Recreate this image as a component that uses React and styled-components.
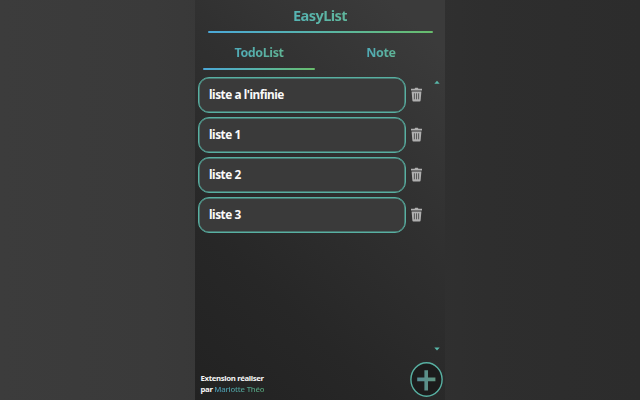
import React from "react";
import styled, { createGlobalStyle } from "styled-components";

const GlobalStyle = createGlobalStyle`
  * { box-sizing: border-box; }
  body { margin: 0; background: #2d2d2d; overflow: hidden; }
`;

const Page = styled.main`
  width: 640px;
  height: 400px;
  display: flex;
  justify-content: center;
  background: linear-gradient(90deg, #3c3c3c 0%, #3a3a3a 24%, #2e2e2e 76%, #2c2c2c 100%);
  font-family: "Noto Sans", "Open Sans", sans-serif;
  font-weight: 600;
`;

const Panel = styled.section`
  width: 250px;
  height: 400px;
  display: flex;
  flex-direction: column;
  background: linear-gradient(42deg, #222 0%, #272727 28%, #303030 60%, #3b3b3b 92%);
`;

const Header = styled.header`
  height: 33px;
  margin: 0 12.5px;
  display: flex;
  flex-direction: column;
  align-items: center;
  justify-content: space-between;
`;

const Title = styled.h1`
  margin: 5px 0 0;
  font-size: 14.6px;
  line-height: 21px;
  font-weight: 700;
  letter-spacing: -0.6px;
  color: transparent;
  background: linear-gradient(90deg, #55b4b4, #60b69c);
  background-clip: text;
`;

const Underline = styled.div`
  width: 100%;
  height: 2px;
  border-radius: 1px;
  background: linear-gradient(90deg, #4ba8d8, #58b4a8 50%, #68bd6c);
  visibility: ${(p) => (p.$hidden ? "hidden" : "visible")};
`;

const Tabs = styled.nav`
  height: 37px;
  display: flex;
  padding: 0 8px;
  gap: 10px;
`;

const Tab = styled.div`
  width: 112px;
  display: flex;
  flex-direction: column;
  align-items: center;
  justify-content: space-between;
`;

const TabLabel = styled.span`
  margin-top: 9px;
  font-size: 12.5px;
  font-weight: 700;
  line-height: 21px;
  letter-spacing: -0.4px;
  color: transparent;
  background: linear-gradient(90deg, #4faab8, #60b595);
  background-clip: text;
`;

const Body = styled.div`
  flex: 1;
  display: flex;
  justify-content: space-between;
  padding: 7px 5px 0 3px;
`;

const List = styled.ul`
  list-style: none;
  margin: 0;
  padding: 0;
  display: flex;
  flex-direction: column;
  gap: 4px;
`;

const Row = styled.li`
  height: 36px;
  display: flex;
  align-items: center;
  gap: 4px;
`;

const Card = styled.div`
  width: 208px;
  height: 36px;
  padding-left: 10px;
  border: 1px solid #58b0a2;
  border-radius: 11px;
  box-shadow: inset 0 0 0 0.5px #58b0a2;
  background: #3a3a3a;
  color: #fafafa;
  font-size: 11.8px;
  line-height: 32px;
  font-weight: 700;
  letter-spacing: -0.45px;
`;

const TrashSvg = styled.svg`
  width: 13px;
  height: 15px;
  margin-bottom: 1px;
`;

const Scroll = styled.div`
  width: 6px;
  height: 271px;
  margin-top: 3px;
  display: flex;
  flex-direction: column;
  justify-content: space-between;
`;

const Arrow = styled.svg`
  width: 6px;
  height: 4px;
`;

const Footer = styled.footer`
  height: 42px;
  display: flex;
  justify-content: space-between;
  padding: 4px 2px 3px 5.5px;
`;

const Credit = styled.p`
  margin: 11px 0 0;
  color: #f4f4f4;
  font-size: 7.8px;
  line-height: 11px;
  font-weight: 700;
  letter-spacing: -0.35px;
`;

const Author = styled.span`
  font-weight: 500;
  letter-spacing: -0.2px;
  color: transparent;
  background: linear-gradient(90deg, #4a9dc0, #58a777);
  background-clip: text;
`;

const AddSvg = styled.svg`
  width: 33px;
  height: 35px;
`;

function Trash() {
  return (
    <TrashSvg viewBox="0 0 13 15" aria-label="delete">
      <path d="M1 3.4V1.8h3.6L5.2.8h2.6l.6 1H12v1.6z" fill="#b0b0b0" />
      <path d="M1.6 4.5h9.8l-.8 9q-.1.9-1 .9H3.4q-.9 0-1-.9z" fill="#b0b0b0" />
      <path d="M4.4 6.3v6M6.5 6.3v6M8.6 6.3v6" stroke="#505050" strokeWidth=".9" />
    </TrashSvg>
  );
}

const lists = ["liste a l'infinie", "liste 1", "liste 2", "liste 3"];

export default function App() {
  return (
    <Page>
      <GlobalStyle />
      <Panel>
        <Header>
          <Title>EasyList</Title>
          <Underline />
        </Header>
        <Tabs>
          <Tab>
            <TabLabel>TodoList</TabLabel>
            <Underline />
          </Tab>
          <Tab>
            <TabLabel>Note</TabLabel>
            <Underline $hidden />
          </Tab>
        </Tabs>
        <Body>
          <List>
            {lists.map((name) => (
              <Row key={name}>
                <Card>{name}</Card>
                <Trash />
              </Row>
            ))}
          </List>
          <Scroll>
            <Arrow viewBox="0 0 6 4"><path d="M.3 3.8 3 .8l2.7 3z" fill="#58b8aa" /></Arrow>
            <Arrow viewBox="0 0 6 4"><path d="M.3.5 3 3.5 5.7.5z" fill="#58b8aa" /></Arrow>
          </Scroll>
        </Body>
        <Footer>
          <Credit>
            Extension réaliser<br />par <Author>Mariotte Théo</Author>
          </Credit>
          <AddSvg viewBox="0 0 33 35" aria-label="add">
            <defs>
              <linearGradient id="plus" x1="0" x2="1" y1="0" y2="0">
                <stop offset="0" stopColor="#568b94" />
                <stop offset="1" stopColor="#609580" />
              </linearGradient>
            </defs>
            <ellipse cx="16.5" cy="17.5" rx="15.6" ry="16.7" fill="#1c1c1c" stroke="#58b0a2" strokeWidth="1.4" />
            <path d="M14.4 8.2h3.6v7.3h7.4v3.7h-7.4v9.2h-3.6v-9.2H7.2v-3.7h7.2z" fill="url(#plus)" />
          </AddSvg>
        </Footer>
      </Panel>
    </Page>
  );
}
